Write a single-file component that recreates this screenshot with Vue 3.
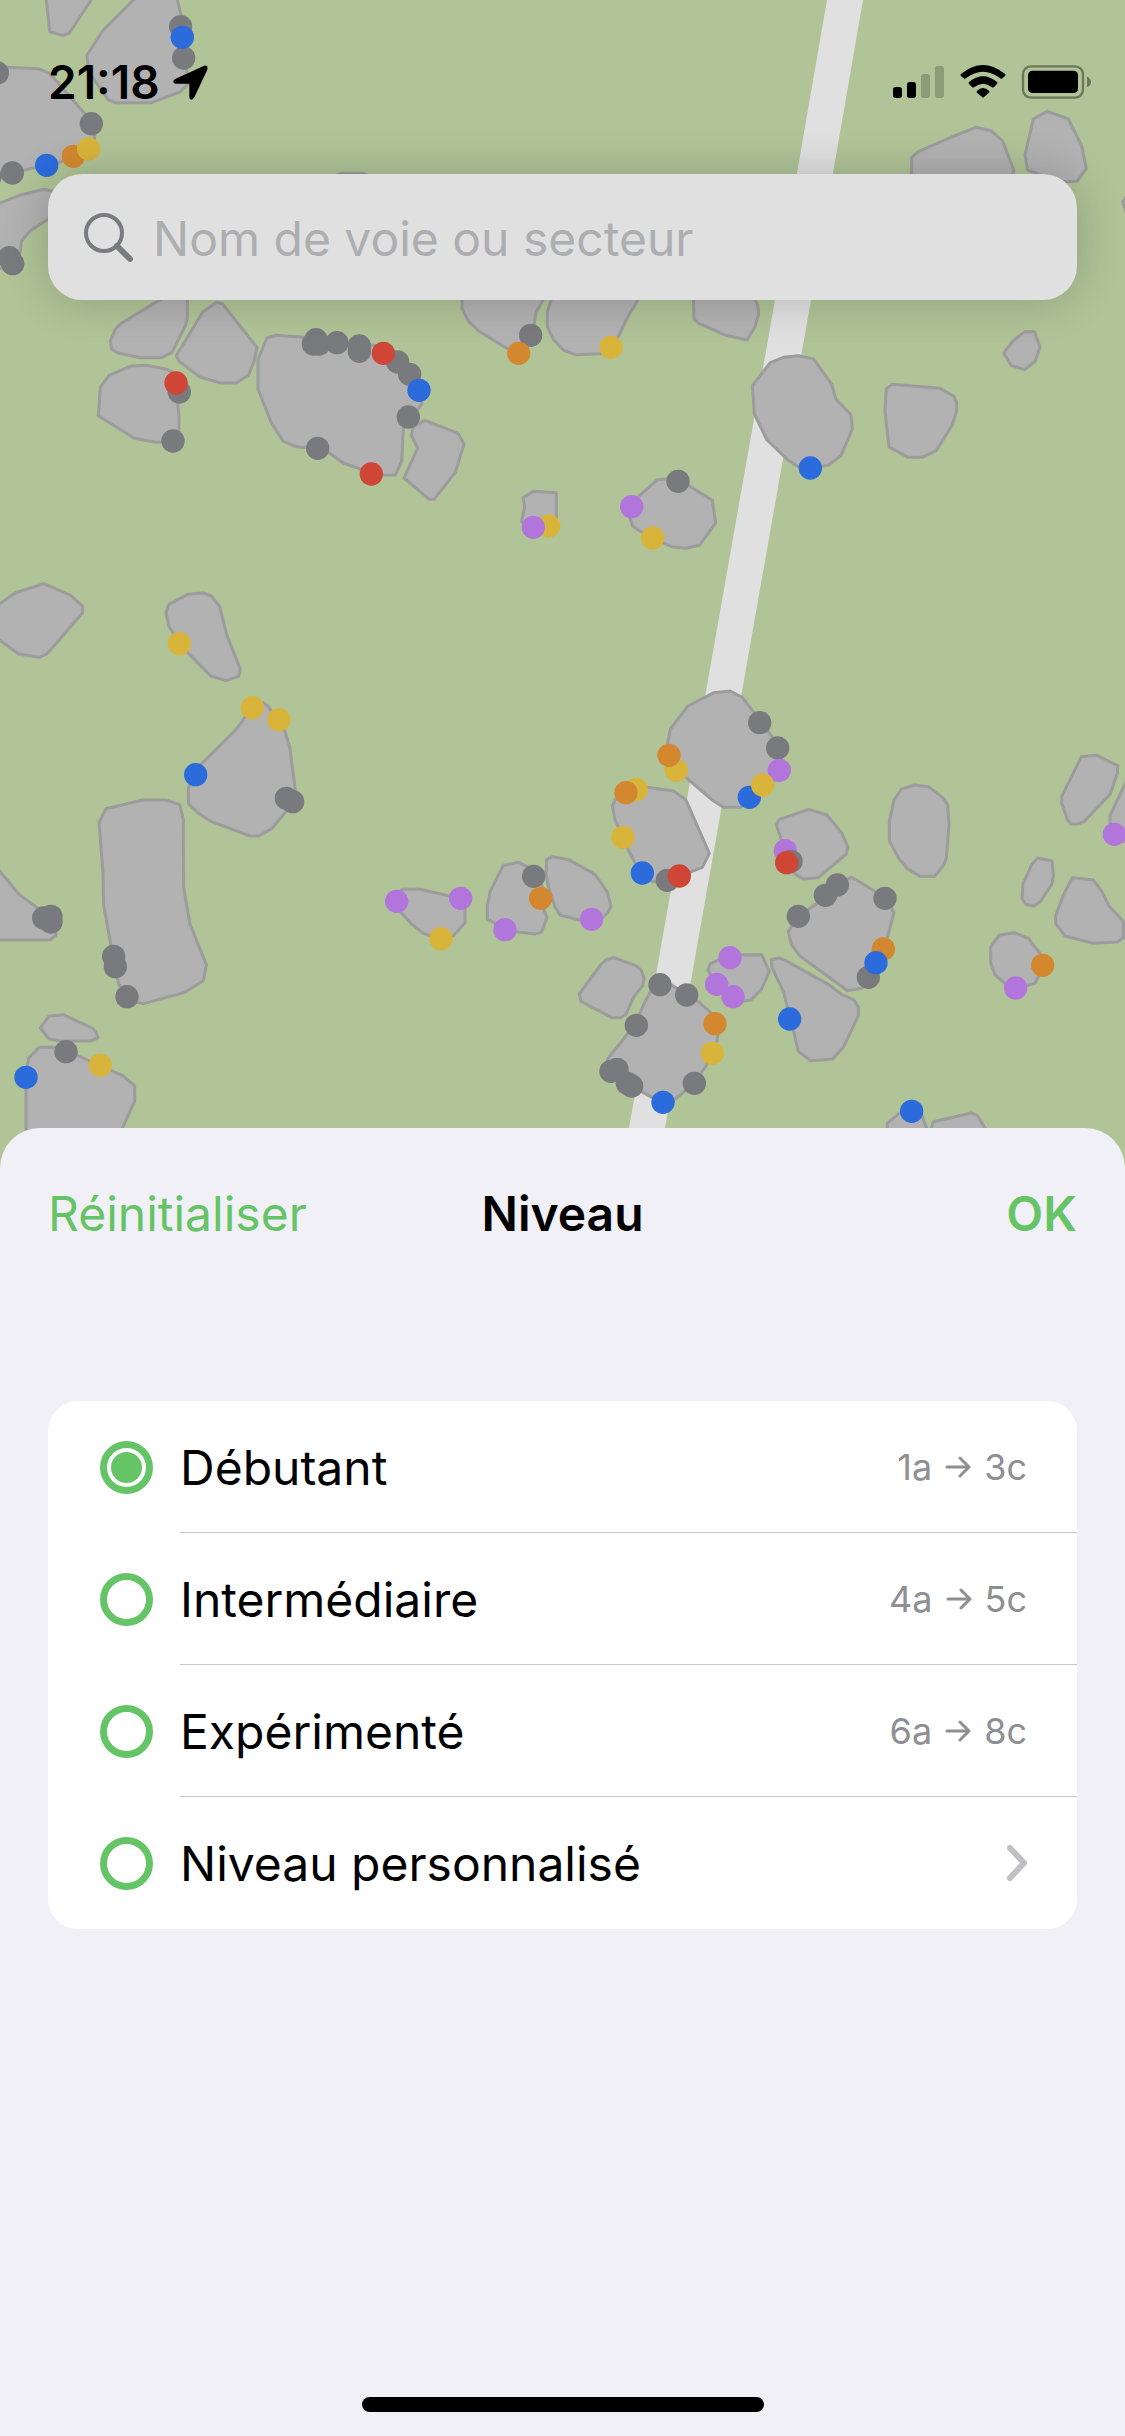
<script setup>
import { ref } from 'vue'

const query = ref('')
const selected = ref('beginner')

const levels = [
  { id: 'beginner', name: 'Débutant', from: '1a', to: '3c' },
  { id: 'intermediate', name: 'Intermédiaire', from: '4a', to: '5c' },
  { id: 'advanced', name: 'Expérimenté', from: '6a', to: '8c' },
  { id: 'custom', name: 'Niveau personnalisé' },
]

// Vector tiles: origin in map pixels, geometry in thirds of a pixel.
const tiles = [
  {
    x: 0, y: 0,
    rocks: [
      '138,-10 149,95 189,107 208,99 280,-10',
      '410,-10 310,90 261,165 266,215 325,300 346,308 454,308 540,276 562,255 556,120 543,45 530,-10',
      '-20,202 20,202 115,206 150,221 255,342 284,385 284,425 260,460 190,484 60,513 0,530 -20,530',
      '-20,617 65,584 132,568 170,577 185,620 140,660 90,693 65,722 60,760 30,800 -20,810',
      '1000,530 1025,520 1090,520 1110,530',
    ],
    dots: [
      ['grey', 542, 80], ['grey', 551, 174], ['blue', 547, 112], ['grey', -8, 219],
      ['grey', 274, 371], ['orange', 220, 469], ['yellow', 266, 447], ['blue', 140, 496],
      ['grey', 37, 519], ['grey', -30, 530], ['grey', 28, 773], ['grey', 38, 791],
    ],
  },
  {
    x: 745, y: 0,
    rocks: [
      '500,540 500,473 520,455 620,411 692,382 738,392 773,423 806,511 800,540',
      '907,334 970,357 1010,437 1024,506 997,543 960,545 900,530 848,510 840,465 865,357',
      '1160,560 1133,607 1145,640 1160,650',
    ],
    dots: [],
  },
  {
    x: 0, y: 280,
    rocks: [
      '562,30 562,115 556,138 516,217 485,233 422,233 354,219 335,207 331,184 346,147 364,130 520,35',
      '650,67 668,72 771,202 762,244 745,286 708,309 662,309 600,291 540,246 528,228 609,95',
      '437,256 501,268 525,280 537,410 537,470 500,487 468,487 403,475 295,407 301,322 327,286 390,259',
      '825,166 1000,178 1150,200 1230,270 1265,330 1265,372 1210,445 1205,545 1186,585 1150,585 1080,567 1030,549 985,517 960,505 891,501 850,484 815,430 774,327 774,238 801,174',
      '-20,985 45,939 132,911 212,946 248,979 248,998 160,1100 140,1122 118,1132 56,1122 -20,1067',
      '563,943 610,939 634,948 659,980 681,1067 721,1167 716,1189 678,1202 632,1188 560,1115 520,1060 507,1040 498,997 506,974',
    ],
    dots: [
      ['grey', 948, 179], ['grey', 940, 192], ['grey', 957, 192], ['grey', 1011, 188],
      ['grey', 1078, 198], ['grey', 1078, 214], ['grey', 538, 336], ['red', 528, 309],
      ['grey', 519, 483], ['grey', 953, 505], ['red', 1114, 582], ['yellow', 538, 1091],
    ],
  },
  {
    x: 360, y: 280,
    rocks: [
      '195,421 294,460 312,492 286,577 222,658 208,658 132,594 173,504 154,467 160,440',
      '520,634 589,638 589,720 560,750 510,750 485,724 494,680 489,653',
      '892,599 950,594 1057,661 1067,729 1018,796 977,805 936,800 900,785 845,757 818,738 805,700 830,655',
      '306,40 306,85 324,122 356,153 445,208 475,210 510,170 522,135 529,95 560,40',
      '580,40 562,95 562,141 580,178 610,210 645,224 725,221 770,180 800,117 845,40',
      '1000,40 1002,118 1016,130 1098,166 1161,180 1185,141 1196,100 1193,75 1175,40',
    ],
    dots: [
      ['grey', 113, 246], ['grey', 149, 283], ['red', 70, 220], ['blue', 177, 331],
      ['grey', 145, 411], ['grey', 512, 166], ['orange', 476, 220], ['yellow', 753, 202],
      ['yellow', 566, 738], ['purple', 520, 742], ['grey', 954, 604], ['purple', 815, 680],
      ['yellow', 878, 774],
    ],
  },
  {
    x: 725, y: 280,
    rocks: [
      '175,232 220,227 266,237 320,313 332,356 378,405 382,447 348,527 311,555 256,566 220,560 190,541 126,480 88,402 82,317 135,249',
      '501,313 645,325 687,349 695,368 695,391 682,435 634,511 592,532 550,532 492,501 480,395 484,326',
      '899,155 928,155 945,202 931,243 899,269 859,257 836,219 864,183',
    ],
    dots: [['blue', 256, 564]],
  },
  {
    x: 0, y: 660,
    rocks: [
      '790,128 803,138 852,205 869,260 886,390 870,440 815,506 776,528 750,528 633,484 597,461 565,431 565,385 590,325 610,306 709,208 740,165 760,140',
      '428,420 498,420 539,434 550,478 551,683 570,793 619,914 610,962 555,997 431,1031 385,1022 355,970 333,858 311,735 309,640 297,487 318,446',
      '-20,610 57,703 110,742 165,800 168,825 150,840 -20,840',
      '146,1069 190,1064 280,1106 288,1116 294,1134 271,1143 182,1143 146,1136 121,1104',
      '118,1162 180,1162 235,1188 330,1230 368,1247 404,1278 404,1324 350,1440 78,1440 78,1240 86,1194',
    ],
    dots: [
      ['yellow', 757, 143], ['yellow', 837, 179], ['blue', 587, 344], ['grey', 859, 415],
      ['grey', 878, 425], ['grey', 131, 774], ['grey', 153, 769], ['grey', 153, 786],
      ['grey', 341, 889], ['grey', 346, 920], ['grey', 381, 1010], ['grey', 198, 1175],
      ['blue', 78, 1252], ['yellow', 301, 1216],
    ],
  },
  {
    x: 370, y: 660,
    rocks: [
      '1032,98 1080,93 1117,112 1152,158 1210,235 1235,290 1225,350 1160,410 1110,442 1060,442 1027,420 945,350 905,300 893,250 901,207 954,138',
      '790,380 830,382 911,393 948,420 1018,580 997,622 930,648 890,665 845,665 815,640 790,600 770,560 735,478 727,438 745,400',
      '97,688 150,688 238,708 285,730 285,788 250,827 213,838 160,820 125,792 80,745 75,710',
      '400,616 446,607 500,635 520,690 515,730 531,773 514,817 495,822 440,815 400,805 352,777 352,735 361,693',
      '530,599 548,590 596,599 675,643 712,696 723,738 714,757 685,785 640,783 570,765 555,740 535,680 528,640',
      '710,898 732,893 797,917 813,930 822,953 819,976 792,1010 768,1063 752,1073 726,1073 633,1024 628,1002 692,915',
      '870,970 905,975 985,1025 1030,1065 1045,1115 1035,1180 1010,1215 972,1270 910,1322 879,1330 820,1298 780,1275 720,1235 712,1198 770,1125 805,1070 825,1025 845,990',
      '1080,885 1175,884 1198,935 1174,988 1143,1020 1090,1028 1040,980 1014,930 1021,911',
    ],
    dots: [
      ['yellow', 919, 331], ['orange', 897, 286], ['yellow', 799, 389], ['orange', 768, 398],
      ['yellow', 759, 532], ['blue', 817, 639], ['grey', 892, 661], ['red', 928, 648],
      ['purple', 80, 724], ['purple', 272, 715], ['yellow', 213, 836], ['grey', 491, 649],
      ['orange', 512, 715], ['purple', 405, 809], ['purple', 665, 778], ['purple', 1080, 893],
      ['purple', 1040, 973], ['purple', 1089, 1010], ['grey', 870, 974], ['grey', 950, 1005],
      ['grey', 799, 1096], ['orange', 1035, 1091], ['yellow', 1027, 1180], ['grey', 723, 1234],
      ['grey', 741, 1228], ['grey', 772, 1270], ['grey', 785, 1278], ['grey', 973, 1270],
      ['blue', 879, 1327],
    ],
  },
  {
    x: 725, y: 660,
    rocks: [
      '252,448 306,465 351,520 369,561 364,582 280,653 234,657 200,635 180,570 154,495 163,478',
      '568,375 610,380 657,416 668,434 672,495 664,595 655,617 629,649 586,649 547,626 521,595 493,542 493,485 507,420 529,388',
      '380,652 480,712 500,745 507,758 485,840 450,900 410,985 368,992 226,889 199,853 190,815 220,770 290,720 340,670',
      '139,899 163,894 182,902 315,976 348,1002 387,1020 400,1042 400,1067 355,1162 323,1197 257,1202 220,1174 205,1110 175,995 141,922',
      '1069,290 1115,286 1178,317 1177,340 1156,402 1078,484 1060,492 1037,492 1027,478 1010,430 1010,410',
      '1220,330 1155,467 1155,500 1180,540 1220,550',
      '938,594 981,603 985,648 981,672 945,726 926,738 902,733 891,715 894,672 921,612',
      '1042,653 1105,660 1131,695 1152,738 1195,784 1195,834 1177,846 1105,850 1020,828 992,791 992,767 1015,705',
      '868,818 910,835 945,880 955,920 930,970 873,985 840,970 810,945 797,907 797,861 823,825',
      '487,1440 487,1390 525,1358 590,1365 615,1430',
      '610,1430 625,1385 739,1359 757,1367 790,1420',
    ],
    dots: [
      ['grey', 104, 188], ['grey', 158, 264], ['purple', 163, 331], ['blue', 73, 412],
      ['yellow', 113, 375], ['purple', 181, 572], ['grey', 198, 604], ['red', 185, 608],
      ['grey', 220, 769], ['grey', 301, 706], ['grey', 337, 675], ['grey', 480, 715],
      ['grey', 430, 952], ['orange', 475, 867], ['blue', 453, 908], ['blue', 194, 1077],
      ['purple', 1168, 523], ['orange', 953, 916], ['purple', 872, 984], ['blue', 560, 1354],
    ],
  },
]

const place = (tile) => `translate(${tile.x} ${tile.y}) scale(${1 / 3})`
</script>

<template>
  <main class="screen">
    <section class="map-area">
      <svg class="map" viewBox="0 0 1125 1168" preserveAspectRatio="xMidYMin slice" aria-hidden="true">
        <polygon class="trail" points="827,0 863,0 811,300 744,680 665,1128 657,1168 621,1168 629,1128 708,680 775,300" />
        <g v-for="(tile, t) in tiles" :key="'r' + t" :transform="place(tile)">
          <polygon v-for="(rock, r) in tile.rocks" :key="r" class="rock" :points="rock" />
        </g>
        <g v-for="(tile, t) in tiles" :key="'d' + t" :transform="place(tile)">
          <circle v-for="([color, x, y], d) in tile.dots" :key="d" :class="['dot', color]" :cx="x" :cy="y" r="35" />
        </g>
      </svg>

      <div class="status-bar">
        <time class="clock">21:18</time>
        <svg class="location" viewBox="518 196 105 105" aria-hidden="true">
          <path d="M610 199 Q624 194 621 210 L582 293 Q578 300 573 300 Q567 300 567 292 V252 H527 Q519 252 519 245 Q519 240 526 237 Z" />
        </svg>
        <svg class="indicators" viewBox="444 192 594 108" aria-hidden="true">
          <rect x="444" y="261" width="27" height="33" rx="8" />
          <rect x="486" y="246" width="27" height="48" rx="8" />
          <rect class="dim" x="528" y="222" width="27" height="72" rx="8" />
          <rect class="dim" x="570" y="198" width="27" height="96" rx="8" />
          <path d="M648 222 Q714 168 780 222 Q783 225 780 228 L772 235 Q769 238 766 235 Q714 196 662 235 Q659 238 656 235 L648 228 Q645 225 648 222 Z" />
          <path d="M672 246 Q714 211 756 246 Q759 249 756 252 L747 261 Q744 264 741 262 Q714 241 687 262 Q684 264 681 261 L672 252 Q669 249 672 246 Z" />
          <path d="M696 272 Q714 256 732 272 Q735 275 732 278 L716 292 Q714 294 712 292 L696 278 Q693 275 696 272 Z" />
          <rect class="battery-case" x="834" y="199" width="180" height="94" rx="24" />
          <rect x="849" y="212" width="150" height="67" rx="13" />
          <path class="battery-tip" d="M1026 230 Q1038 235 1038 246 Q1038 257 1026 262 Z" />
        </svg>
      </div>

      <label class="search">
        <svg class="search-icon" viewBox="0 0 49 49" aria-hidden="true">
          <circle cx="20" cy="20" r="18" />
          <path d="M33 33 L46 46" />
        </svg>
        <input v-model="query" class="search-input" type="text" placeholder="Nom de voie ou secteur" aria-label="Rechercher" />
      </label>
    </section>

    <section class="sheet">
      <header class="sheet-header">
        <button type="button" class="action reset">Réinitialiser</button>
        <h1 class="title">Niveau</h1>
        <button type="button" class="action confirm">OK</button>
      </header>

      <div class="levels" role="radiogroup" aria-label="Niveau">
        <label v-for="level in levels" :key="level.id" class="level">
          <input v-model="selected" class="radio" type="radio" name="level" :value="level.id" />
          <span class="level-body">
            <span class="level-name">{{ level.name }}</span>
            <span v-if="level.from" class="range">
              {{ level.from }}
              <svg class="arrow" viewBox="0 0 26 22" role="img" aria-label="à">
                <path d="M2 11 H24 M15 2 L24 11 L15 20" />
              </svg>
              {{ level.to }}
            </span>
            <svg v-else class="chevron" viewBox="0 0 20 36" aria-hidden="true">
              <path d="M3 3 L17 18 L3 33" />
            </svg>
          </span>
        </label>
      </div>

      <div class="home-indicator"></div>
    </section>
  </main>
</template>

<style>
body {
  margin: 0;
}
</style>

<style scoped>
.screen {
  display: flex;
  flex-direction: column;
  min-height: 100vh;
  background: #b0c497;
  color: #000;
  font-family: Inter, "Liberation Sans", sans-serif;
  font-size: 48px;
  line-height: 60px;
}

.map-area {
  position: relative;
  flex: 1;
  display: flex;
  flex-direction: column;
  min-height: 400px;
}

.map {
  position: absolute;
  inset: 0;
  width: 100%;
  height: 100%;
}

.trail {
  fill: #e0e0e0;
}

.rock {
  fill: #b2b2b2;
  stroke: #9c9c9c;
  stroke-width: 9;
  stroke-linejoin: round;
}

.grey { fill: #787a7d; }
.blue { fill: #2b6bdb; }
.orange { fill: #d3882f; }
.yellow { fill: #d9b43b; }
.red { fill: #cf4536; }
.purple { fill: #b275dc; }

.status-bar {
  position: relative;
  display: flex;
  align-items: center;
  height: 60px;
  padding: 52px 34px 62px 48px;
}

.clock {
  font-size: 46px;
  font-weight: 600;
}

.location {
  width: 35px;
  height: 35px;
  margin-left: 13px;
}

.indicators {
  width: 198px;
  height: 36px;
  margin-left: auto;
}

.dim {
  fill: #8d9c78;
}

.battery-case {
  fill: none;
  stroke: #6a775b;
  stroke-width: 7;
}

.battery-tip {
  fill: #6a775b;
}

.search {
  position: relative;
  display: flex;
  align-items: center;
  gap: 20px;
  height: 126px;
  margin: 0 48px;
  padding: 0 36px;
  border-radius: 34px;
  background: #e0e0e0;
  box-shadow: 0 0 45px rgba(0, 0, 0, 0.2);
}

.search-icon {
  flex: none;
  width: 49px;
  height: 49px;
  fill: none;
  stroke: #7a7b7e;
  stroke-width: 4;
  stroke-linecap: round;
}

.search-icon path {
  stroke-width: 6;
}

.search-input {
  flex: 1;
  min-width: 0;
  padding: 3px 0 0;
  border: 0;
  outline: 0;
  background: none;
  color: #000;
  font: inherit;
}

.search-input::placeholder {
  color: #adaeb0;
  opacity: 1;
}

.sheet {
  position: relative;
  display: flex;
  flex-direction: column;
  margin-top: -40px;
  padding: 56px 48px 24px;
  border-radius: 40px 40px 0 0;
  background: #f1f0f6;
}

.sheet-header {
  display: grid;
  grid-template-columns: 1fr auto 1fr;
  align-items: center;
}

.action {
  padding: 0;
  border: 0;
  background: none;
  color: #65c466;
  font: inherit;
  cursor: pointer;
}

.reset {
  justify-self: start;
}

.confirm {
  justify-self: end;
  font-weight: 600;
}

.title {
  margin: 0;
  font-size: inherit;
  font-weight: 600;
}

.levels {
  margin-top: 157px;
  border-radius: 30px;
  background: #fff;
  overflow: hidden;
}

.level {
  display: flex;
  align-items: center;
  gap: 27px;
  padding-left: 52px;
  cursor: pointer;
}

.radio {
  appearance: none;
  box-sizing: border-box;
  flex: none;
  width: 53px;
  height: 53px;
  margin: 0;
  padding: 4px;
  border: 7px solid #65c466;
  border-radius: 50%;
  background-clip: content-box;
}

.radio:checked {
  background-color: #65c466;
}

.level-body {
  box-sizing: border-box;
  flex: 1;
  display: flex;
  align-items: center;
  justify-content: space-between;
  height: 132px;
  padding-right: 50px;
  border-bottom: 1px solid #c6c6c8;
}

.level:last-child .level-body {
  border-bottom-color: transparent;
}

.level-name {
  padding-top: 3px;
}

.range {
  display: flex;
  align-items: center;
  gap: 13px;
  color: #8e8e93;
  font-size: 36px;
}

.arrow {
  width: 26px;
  height: 22px;
  fill: none;
  stroke: #8e8e93;
  stroke-width: 3;
  stroke-linecap: round;
  stroke-linejoin: round;
}

.chevron {
  width: 20px;
  height: 36px;
  fill: none;
  stroke: #c0c0c2;
  stroke-width: 6;
  stroke-linecap: round;
  stroke-linejoin: round;
}

.home-indicator {
  align-self: center;
  width: 402px;
  max-width: 60%;
  height: 15px;
  margin-top: 468px;
  border-radius: 8px;
  background: #000;
}
</style>
